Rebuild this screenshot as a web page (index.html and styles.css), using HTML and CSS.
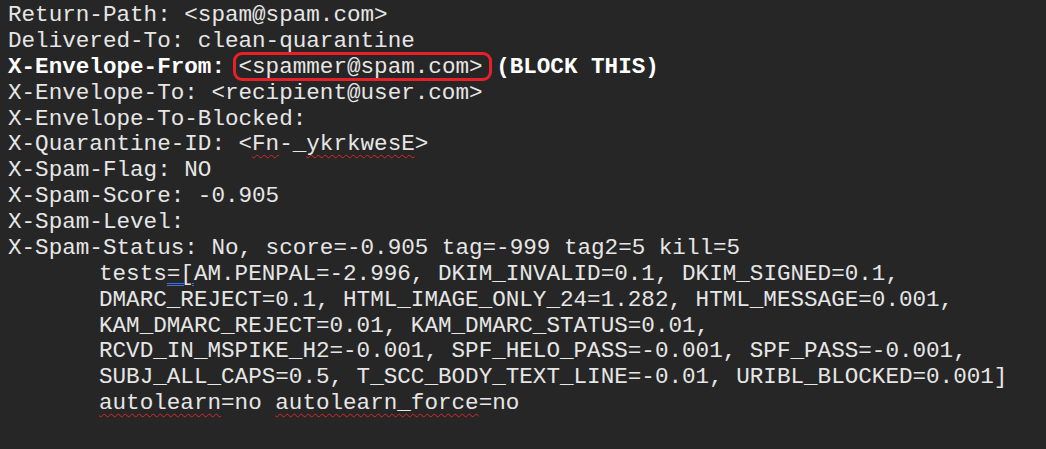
FILE: index.html
```html
<!DOCTYPE html>
<html>
<head>
<meta charset="utf-8">
<link rel="stylesheet" href="styles.css">
</head>
<body>
<div class="headers">
  <div class="line">Return-Path: &lt;spam@spam.com&gt;</div>
  <div class="line">Delivered-To: clean-quarantine</div>
  <div class="line"><b class="strong">X-Envelope-From:</b> <span class="boxed">&lt;spammer@spam.com&gt;</span> <b class="strong">(BLOCK THIS)</b></div>
  <div class="line">X-Envelope-To: &lt;recipient@user.com&gt;</div>
  <div class="line">X-Envelope-To-Blocked:</div>
  <div class="line">X-Quarantine-ID: &lt;<span class="spell">Fn</span>-_<span class="spell">ykrkwesE</span>&gt;</div>
  <div class="line">X-Spam-Flag: NO</div>
  <div class="line">X-Spam-Score: -0.905</div>
  <div class="line">X-Spam-Level:</div>
  <div class="line">X-Spam-Status: No, score=-0.905 tag=-999 tag2=5 kill=5</div>
  <div class="line indent">tests<span class="grammar">=[</span>AM.PENPAL=-2.996, DKIM_INVALID=0.1, DKIM_SIGNED=0.1,</div>
  <div class="line indent">DMARC_REJECT=0.1, HTML_IMAGE_ONLY_24=1.282, HTML_MESSAGE=0.001,</div>
  <div class="line indent">KAM_DMARC_REJECT=0.01, KAM_DMARC_STATUS=0.01,</div>
  <div class="line indent">RCVD_IN_MSPIKE_H2=-0.001, SPF_HELO_PASS=-0.001, SPF_PASS=-0.001,</div>
  <div class="line indent">SUBJ_ALL_CAPS=0.5, T_SCC_BODY_TEXT_LINE=-0.01, URIBL_BLOCKED=0.001]</div>
  <div class="line indent"><span class="spell">autolearn</span>=no <span class="spell">autolearn_force</span>=no</div>
</div>
</body>
</html>
```

FILE: styles.css
```css
html, body {
  margin: 0;
  padding: 0;
  background: #262626;
}

body {
  width: 1046px;
  height: 449px;
  overflow: hidden;
}

.headers {
  padding: 3px 0 0 8px;
  font-family: "Liberation Mono", "Courier New", monospace;
  font-size: 22.6px;
  line-height: 25.87px;
  color: #e6e6e6;
}

.line {
  white-space: pre;
}

.indent {
  padding-left: 91px;
}

.strong {
  font-weight: bold;
  color: #ffffff;
}

.boxed {
  position: relative;
}

.boxed::after {
  content: "";
  position: absolute;
  top: -2px;
  bottom: -1px;
  left: -6px;
  right: -9px;
  border: 3px solid #e8202a;
  border-radius: 9px;
}

.spell {
  text-decoration: underline wavy #e0262a;
  text-decoration-thickness: 1px;
  text-underline-offset: 4px;
}

.grammar {
  text-decoration: underline double #3b73e0;
  text-decoration-thickness: 1px;
  text-underline-offset: 3px;
}
```
